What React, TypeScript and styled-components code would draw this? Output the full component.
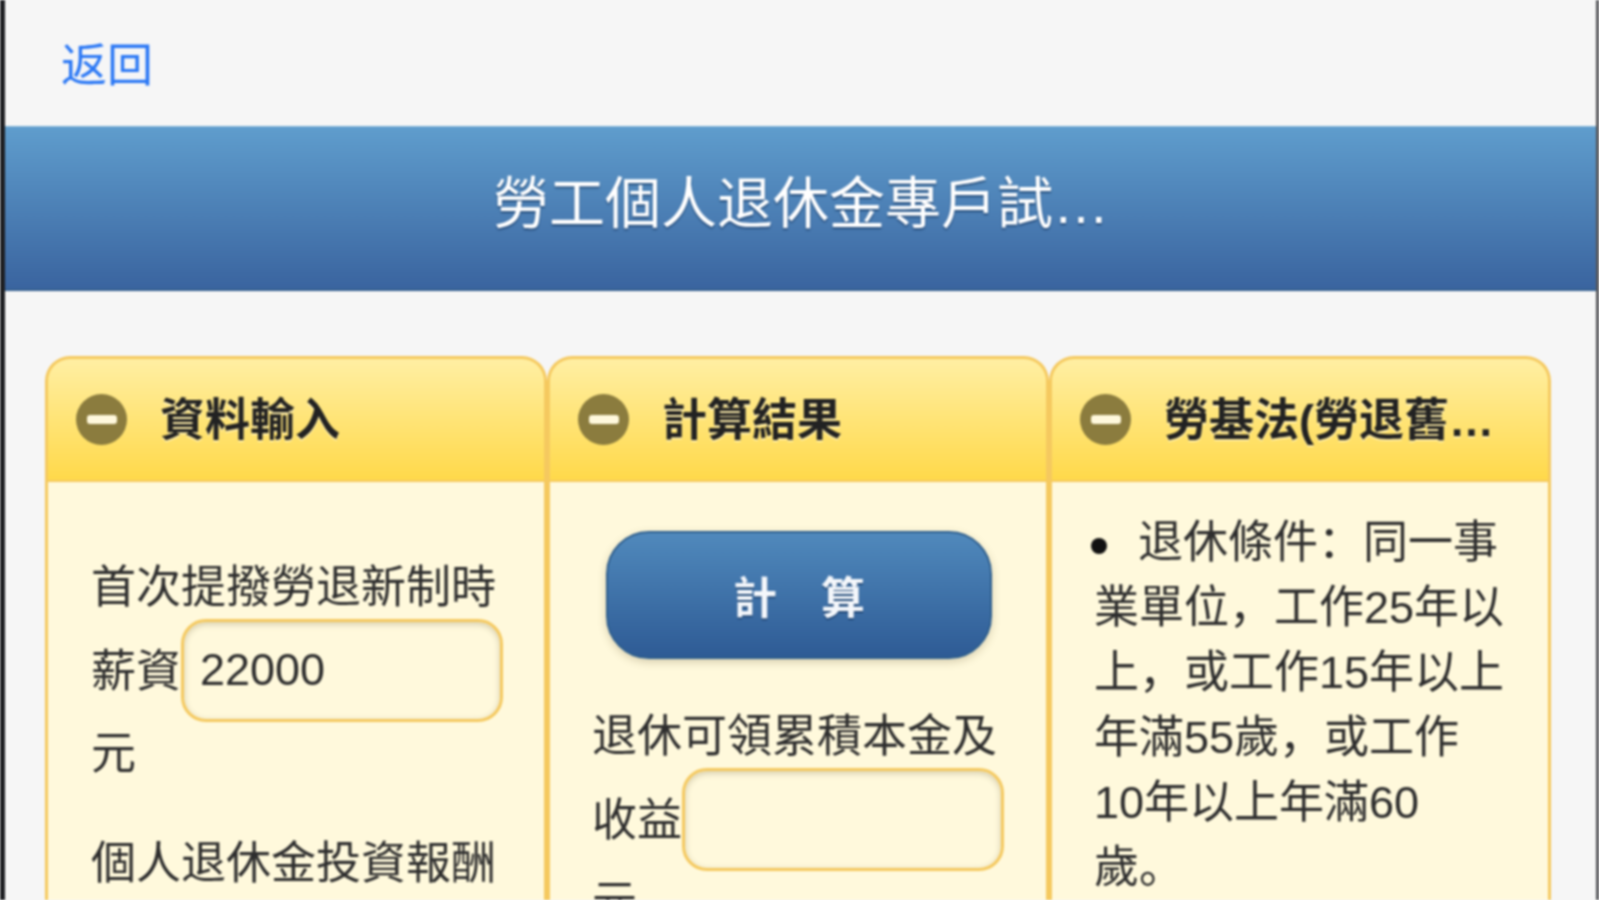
import React from 'react';
import styled, { createGlobalStyle } from 'styled-components';

const GlobalStyle = createGlobalStyle`
  html, body {
    margin: 0;
    padding: 0;
    height: 900px;
    overflow: hidden;
    background: #f6f6f6;
  }

  * {
    box-sizing: border-box;
  }
`;

const Page = styled.div`
  height: 900px;
  overflow: hidden;
  background: #f6f6f6;
  border-left: 5px solid #1e1f22;
  border-right: 3px solid #55565a;
  color: #333;
  font-family: "Liberation Sans", "Noto Sans CJK SC", sans-serif;
  font-size: 45px;
  filter: blur(1px);
`;

const TopBar = styled.div`
  height: 126px;
  display: flex;
  align-items: center;
  padding: 0 0 4px 56px;
`;

const BackLink = styled.a`
  font-size: 46px;
  color: #2b78f5;
  text-decoration: none;
`;

const TitleBar = styled.header`
  height: 165px;
  display: flex;
  align-items: center;
  background: linear-gradient(#5f9dcd, #3a649f);
  border-top: 1px solid #7fb2d8;
  border-bottom: 2px solid #35608f;
  padding: 0 478px 8px 488px;
`;

const Title = styled.h1`
  flex: 1;
  margin: 0;
  min-width: 0;
  color: #fff;
  font-size: 56px;
  font-weight: 400;
  line-height: 1.2;
  white-space: nowrap;
  overflow: hidden;
  text-overflow: ellipsis;
  text-shadow: 0 2px 2px rgba(20, 50, 90, 0.6);
`;

const Columns = styled.main`
  display: grid;
  grid-template-columns: repeat(3, 1fr);
  padding: 65px 45px 0 40px;
`;

const Card = styled.section`
  display: flex;
  flex-direction: column;
  min-width: 0;
`;

const CardHead = styled.h2`
  display: flex;
  align-items: center;
  gap: 33px;
  height: 126px;
  margin: 0;
  padding: 0 50px 0 28px;
  background: linear-gradient(#ffefa3, #ffd94a);
  border: 3px solid #f5c95f;
  border-bottom-width: 2px;
  border-radius: 25px 25px 0 0;
  color: #222;
  font-size: 45px;
  font-weight: 700;
  text-shadow: 0 2px 0 rgba(255, 255, 255, 0.4);
`;

const CardTitle = styled.span`
  flex: 1;
  min-width: 0;
  padding-bottom: 6px;
  white-space: nowrap;
  overflow: hidden;
  text-overflow: ellipsis;
`;

const CollapseIcon = styled.span`
  flex: none;
  display: flex;
  align-items: center;
  justify-content: center;
  width: 51px;
  height: 51px;
  border-radius: 50%;
  background: #8b7c3e;

  &::before {
    content: "";
    width: 30px;
    height: 9px;
    border-radius: 3px;
    background: #fff8dc;
  }
`;

const CardBody = styled.div<{ $pad: string }>`
  flex: 1;
  height: 600px;
  padding: ${(p) => p.$pad};
  background: #fff9dc;
  border: 3px solid #f5c95f;
  border-top: 0;
`;

const Field = styled.p`
  margin: 0 0 26px;
  line-height: 84px;
  color: #2e2e2e;
`;

const NumberInput = styled.input`
  width: 322px;
  height: 103px;
  margin: -27px 0 -17px 0;
  padding: 0 16px;
  vertical-align: middle;
  background: #fff9dc;
  border: 3px solid #f5c95f;
  border-radius: 25px;
  box-shadow: inset 0 2px 6px rgba(90, 80, 40, 0.28);
  color: #2e2e2e;
  font: inherit;
  outline: none;
`;

const Unit = styled.span`
  display: block;
  margin-top: -2px;
`;

const CalcButton = styled.button`
  display: block;
  width: 386px;
  height: 128px;
  margin: 0 0 36px 14px;
  background: linear-gradient(#5089bc, #2e5b95);
  border: 2px solid #2f5f8e;
  border-radius: 43px;
  box-shadow: 0 3px 8px rgba(90, 80, 40, 0.25);
  color: #f4f7fb;
  font: inherit;
  font-size: 44px;
  font-weight: 700;
  text-shadow: 0 2px 1px rgba(20, 50, 90, 0.6);
`;

const RuleList = styled.ul`
  margin: 0;
  padding: 0;
  list-style: none;
  line-height: 65px;
  color: #2e2e2e;
`;

const Rule = styled.li`
  &::before {
    content: "";
    display: inline-block;
    width: 16px;
    height: 16px;
    margin: 0 31px 0 -3px;
    vertical-align: middle;
    border-radius: 50%;
    background: #111;
  }
`;

function App () {
  return (
    <Page>
      <GlobalStyle />
      <TopBar>
        <BackLink href="#">返回</BackLink>
      </TopBar>
      <TitleBar>
        <Title>勞工個人退休金專戶試算表</Title>
      </TitleBar>
      <Columns>
        <Card>
          <CardHead>
            <CollapseIcon />
            <CardTitle>資料輸入</CardTitle>
          </CardHead>
          <CardBody $pad="64px 38px 0 43px">
            <Field>
              首次提撥勞退新制時薪資
              <NumberInput type="text" defaultValue="22000" />
              <Unit>元</Unit>
            </Field>
            <Field>個人退休金投資報酬率</Field>
          </CardBody>
        </Card>
        <Card>
          <CardHead>
            <CollapseIcon />
            <CardTitle>計算結果</CardTitle>
          </CardHead>
          <CardBody $pad="49px 38px 0 42px">
            <CalcButton type="button">計　算</CalcButton>
            <Field>
              退休可領累積本金及收益
              <NumberInput type="text" defaultValue="" />
              <Unit>元</Unit>
            </Field>
          </CardBody>
        </Card>
        <Card>
          <CardHead>
            <CollapseIcon />
            <CardTitle>勞基法(勞退舊制)</CardTitle>
          </CardHead>
          <CardBody $pad="28px 42px 0 42px">
            <RuleList>
              <Rule>退休條件：同一事業單位，工作25年以上，或工作15年以上年滿55歲，或工作10年以上年滿60歲。</Rule>
            </RuleList>
          </CardBody>
        </Card>
      </Columns>
    </Page>
  );
}

export default App;
